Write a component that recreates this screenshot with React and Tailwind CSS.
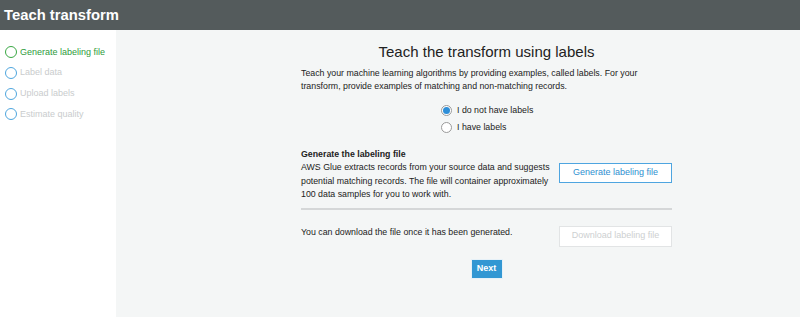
const steps = [
  { label: 'Generate labeling file', active: true },
  { label: 'Label data' },
  { label: 'Upload labels' },
  { label: 'Estimate quality' },
];

const Radio = ({ checked, label }) => (
  <label className="flex items-center gap-[5px] h-[17px]">
    {checked ? (
      <span className="w-[11px] h-[11px] rounded-full border border-[#9a9a9a] bg-white flex items-center justify-center">
        <span className="w-[7px] h-[7px] rounded-full bg-[#2f8fd8]" />
      </span>
    ) : (
      <span className="w-[11px] h-[11px] rounded-full border border-[#9a9a9a] bg-white" />
    )}
    <span className="text-[8.8px] text-[#222]">{label}</span>
  </label>
);

const App = () => {
  return (
    <div className="w-[800px] h-[317px] overflow-hidden" style={{ fontFamily: '"Liberation Sans", Arial, sans-serif' }}>
      <div className="h-[30px] bg-[#545b5c] flex items-center pl-[4px]">
        <h1 className="text-[14.8px] font-bold text-white">Teach transform</h1>
      </div>
      <div className="flex h-[287px]">
        <div className="w-[116px] bg-white pt-[12px] pl-[5px]">
          {steps.map((s) => (
            <div key={s.label} className="flex items-center gap-[3px] h-[20.7px]">
              <span
                className={
                  s.active
                    ? 'w-[12px] h-[12px] rounded-full border-[1.5px] border-[#3aa844]'
                    : 'w-[12px] h-[12px] rounded-full border-[1.5px] border-[#4fa6de]'
                }
              />
              <span className={s.active ? 'text-[9px] text-[#2e9b3c]' : 'text-[9px] text-[#c9cccd]'}>
                {s.label}
              </span>
            </div>
          ))}
        </div>
        <div className="flex-1 bg-[#f4f6f6]">
          <div className="ml-[185px] w-[371px] pt-[12px]">
            <h2 className="text-center text-[15px] leading-[20px] text-[#222]">Teach the transform using labels</h2>
            <p className="mt-[5px] text-[8.8px] leading-[13px] text-[#222]">
              Teach your machine learning algorithms by providing examples, called labels. For your transform, provide examples of matching and non-matching records.
            </p>
            <div className="mt-[9px] flex flex-col items-start ml-[140px]">
              <Radio checked label="I do not have labels" />
              <Radio label="I have labels" />
            </div>
            <div className="mt-[12px] flex items-start justify-between">
              <div className="w-[250px]">
                <div className="text-[8.8px] font-bold leading-[13px] text-[#222]">Generate the labeling file</div>
                <p className="text-[8.8px] leading-[13.5px] text-[#222]">
                  AWS Glue extracts records from your source data and suggests potential matching records. The file will container approximately 100 data samples for you to work with.
                </p>
              </div>
              <button className="mt-[15px] w-[113px] h-[20px] bg-white border border-[#4ea5e0] text-[9px] text-[#2f8fd0]">
                Generate labeling file
              </button>
            </div>
            <div className="mt-[6px] h-[2px] bg-[#d5d7d8]" />
            <div className="mt-[16px] flex items-center justify-between">
              <span className="text-[8.8px] text-[#222] -mt-[6px]">You can download the file once it has been generated.</span>
              <button className="w-[113px] h-[21px] bg-white border border-[#e2e4e5] text-[9px] text-[#cdd0d1]">
                Download labeling file
              </button>
            </div>
            <div className="mt-[12px] flex justify-center">
              <button className="w-[32px] h-[20px] bg-[#3297d3] border border-[#e6f1f8] text-[9px] font-bold text-white">
                Next
              </button>
            </div>
          </div>
        </div>
      </div>
    </div>
  );
};

export default App;
